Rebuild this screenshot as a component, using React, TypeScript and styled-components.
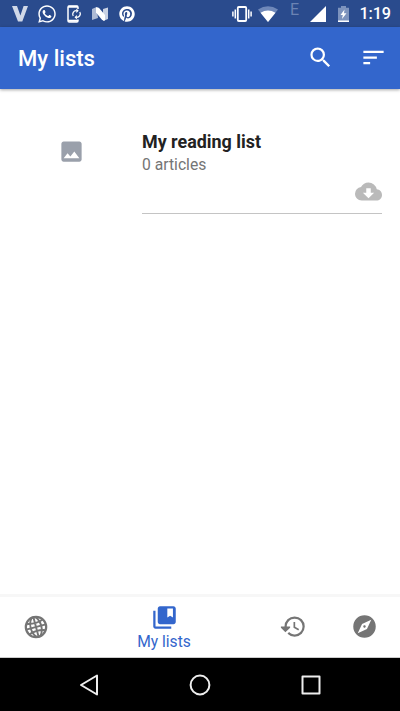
import React from 'react';
import styled, { createGlobalStyle } from 'styled-components';
import { FaWhatsapp, FaPinterest } from 'react-icons/fa';

const GlobalStyle = createGlobalStyle`
  body { margin: 0; background: #fff; font-family: Roboto, "Liberation Sans", sans-serif; }
  * { box-sizing: border-box; }
  svg { display: block; flex: none; }
`;

const Screen = styled.div`
  width: 400px;
  height: 711px;
  display: flex;
  flex-direction: column;
  overflow: hidden;
  background: #fff;
`;

const StatusBar = styled.header`
  height: 27px;
  flex: none;
  display: flex;
  justify-content: space-between;
  background: #2a4b8d;
  color: #fff;
`;

const StatusGroup = styled.div<{ $start?: number; $end?: number }>`
  display: flex;
  align-items: center;
  padding-left: ${(p) => p.$start ?? 0}px;
  padding-right: ${(p) => p.$end ?? 0}px;
`;

const Slot = styled.span<{ $gap?: number }>`
  display: block;
  margin-left: ${(p) => p.$gap ?? 0}px;
`;

const Carrier = styled.span`
  margin: 0 0 7px 12px;
  width: 9px;
  font-size: 16px;
  line-height: 16px;
  color: #6b83b3;
`;

const Clock = styled.time`
  margin-left: 10.500px;
  width: 31.500px;
  font-size: 16.2px;
  line-height: 27px;
  white-space: nowrap;
  letter-spacing: -0.1px;
  font-weight: 500;
`;

const AppBar = styled.div`
  height: 62px;
  flex: none;
  display: flex;
  align-items: center;
  padding: 0 13px 0 18px;
  background: #3366cc;
  color: #fff;
  box-shadow: 0 1px 3px rgba(0, 0, 0, 0.35);
`;

const Title = styled.h1`
  flex: 1;
  margin: 0;
  font-size: 22.1px;
  line-height: 28px;
  font-weight: 500;
`;

const IconButton = styled.button<{ $gap?: number }>`
  padding: 0;
  border: 0;
  background: none;
  color: inherit;
  margin: 0 0 1px ${(p) => p.$gap ?? 0}px;
`;

const List = styled.main`
  flex: 1;
  padding: 40px 18px 0 58px;
`;

const ListItem = styled.article`
  display: flex;
  height: 85px;
`;

const Thumb = styled.div`
  width: 84px;
  padding-top: 8.500px;
  color: #9aa0ab;
`;

const Details = styled.div`
  flex: 1;
  display: flex;
  flex-direction: column;
  border-bottom: 1px solid #c4c4c4;
`;

const ListName = styled.h2`
  margin: 1px 0 0;
  font-size: 17.9px;
  line-height: 23px;
  font-weight: 700;
  color: #222;
`;

const Count = styled.p`
  margin: 2px 0 0;
  font-size: 15.7px;
  line-height: 20px;
  color: #757575;
`;

const Download = styled.div`
  align-self: flex-end;
  margin-top: 3px;
  color: #bababa;
`;

const TabBar = styled.nav`
  height: 64px;
  flex: none;
  display: grid;
  grid-template-columns: 71px 186px 72px 71px;
  border-top: 3px solid #f7f7f7;
  border-bottom: 1px solid #ccc;
`;

const Tab = styled.button<{ $active?: boolean }>`
  display: flex;
  flex-direction: column;
  align-items: center;
  justify-content: ${(p) => (p.$active ? 'flex-start' : 'center')};
  padding: ${(p) => (p.$active ? '7px 0 0' : '0 0 1px')};
  border: 0;
  background: none;
  font-family: inherit;
  color: ${(p) => (p.$active ? '#3366cc' : '#757575')};
`;

const TabLabel = styled.span`
  font-size: 15.6px;
  line-height: 20px;
  margin-top: 1px;
`;

const SystemBar = styled.footer`
  height: 53px;
  flex: none;
  display: grid;
  grid-template-columns: repeat(3, 111px);
  justify-content: center;
  align-items: center;
  justify-items: center;
  background: #000;
`;

const MaterialIcon = ({ d, size }: { d: string; size: number }) => (
  <svg width={size} height={size} viewBox="0 0 24 24" fill="currentColor">
    <path d={d} />
  </svg>
);

const SEARCH =
  'M15.5 14h-.79l-.28-.27A6.47 6.47 0 0 0 16 9.5 6.5 6.5 0 1 0 9.5 16c1.61 0 3.09-.59 4.23-1.57l.27.28v.79l5 4.99L20.49 19l-4.99-5zm-6 0C7.01 14 5 11.99 5 9.5S7.01 5 9.5 5 14 7.01 14 9.5 11.99 14 9.5 14z';
const SORT = 'M3 18h6v-2H3v2zM3 6v2h18V6H3zm0 7h12v-2H3v2z';
const IMAGE =
  'M21 19V5c0-1.1-.9-2-2-2H5c-1.1 0-2 .9-2 2v14c0 1.1.9 2 2 2h14c1.1 0 2-.9 2-2zM8.5 13.5l2.5 3.01L14.5 12l4.5 6H5l3.5-4.5z';
const CLOUD =
  'M19.35 10.04A7.49 7.49 0 0 0 12 4C9.11 4 6.6 5.64 5.35 8.04A5.994 5.994 0 0 0 0 14c0 3.31 2.69 6 6 6h13c2.76 0 5-2.24 5-5 0-2.64-2.05-4.78-4.65-4.96zM17 13l-5 5-5-5h3V9h4v4h3z';
const COLLECTIONS =
  'M4 6H2v14c0 1.1.9 2 2 2h14v-2H4V6zM20 2H8c-1.1 0-2 .9-2 2v12c0 1.1.9 2 2 2h12c1.1 0 2-.9 2-2V4c0-1.1-.9-2-2-2zm-.5 10L17 10.500 14.500 12V4h5v8z';
const HISTORY =
  'M13 3a9 9 0 0 0-9 9H.8v1l4 4 4.200-4v-1H6c0-3.87 3.13-7 7-7s7 3.13 7 7-3.13 7-7 7c-1.93 0-3.68-.79-4.94-2.06l-1.42 1.42A8.954 8.954 0 0 0 13 21a9 9 0 0 0 0-18zm-1 5v5l4.28 2.54.72-1.21-3.5-2.08V8H12z';
const COMPASS =
  'M12 10.9c-.61 0-1.1.49-1.1 1.1s.49 1.1 1.1 1.1c.61 0 1.1-.49 1.1-1.1s-.49-1.1-1.1-1.1zM12 2a10 10 0 1 0 0 20 10 10 0 0 0 0-20zm2.19 12.19L6 18l3.81-8.19L18 6l-3.81 8.19z';

const VIcon = () => (
  <svg width="16" height="16" viewBox="0 0 16 16">
    <path d="M0 0h5l3.400 9.500L11.600 0H16l-5.700 15.500H6z" fill="#d0d8e8" />
  </svg>
);

const PhoneSyncIcon = () => (
  <svg width="15" height="18" viewBox="0 0 15 18" fill="none" stroke="#fff">
    <path d="M11 4V2.200Q11 1 9.800 1H2.200Q1 1 1 2.200v13.600Q1 17 2.200 17h7.600q1.200 0 1.200-1.200V14.500" strokeWidth="1.500" />
    <path d="M1 1.800h10M1 15.800h10" strokeWidth="2" />
    <path d="M6.200 11A3.500 3.500 0 0 1 9.600 5.700M12.800 7A3.500 3.500 0 0 1 9.600 12.300" strokeWidth="1.300" />
    <path d="M9.300 3.500v4.400l2.400-2.200zM9.900 10.100v4.400l-2.400-2.200z" fill="#fff" stroke="none" />
  </svg>
);

const NIcon = () => (
  <svg width="16" height="14" viewBox="0 0 16 14">
    <path d="M0 2l4.500-2 1.500 11L0 13z" fill="#aebbd5" />
    <path d="M11 2l5-1.500V12l-5 2z" fill="#c9d2e4" />
    <path d="M4 .3Q6 0 7.500 1.500L13 8v5.500q-2 .5-3.500-1.300L4 5.500z" fill="#fff" />
  </svg>
);

const VibrateIcon = () => (
  <svg width="20" height="16" viewBox="0 0 20 16" fill="none" stroke="#fff">
    <rect x="5.800" y="1" width="8.400" height="14" rx="1" strokeWidth="1.800" />
    <path d="M3.300 3.500v9M16.700 3.500v9M.9 5.500v5M19.100 5.500v5" strokeWidth="1.500" />
  </svg>
);

const WifiIcon = () => (
  <svg width="20" height="16" viewBox="0 0 20 16">
    <path d="M0 3.500Q10-3 20 3.500L10 16z" fill="#6f88b9" />
    <path d="M2.500 6.800Q10 2 17.500 6.800L10 16z" fill="#fff" />
  </svg>
);

const BatteryIcon = () => (
  <svg width="11" height="16" viewBox="0 0 11 16">
    <path d="M3 0h5v1.800h3V16H0V1.800h3z" fill="#7d93bd" />
    <path d="M0 14.500h11V16H0z" fill="#fff" />
    <path d="M6.500 3.500L2.500 9h2.300L4 13l4.500-5.700H6z" fill="#fff" />
  </svg>
);

const GlobeIcon = () => (
  <svg width="24" height="24" viewBox="0 0 24 24" fill="none" stroke="currentColor" strokeWidth="1.900">
    <circle cx="12" cy="12" r="10.200" strokeWidth="2.200" />
    <g transform="rotate(-15 12 12)">
      <ellipse cx="12" cy="12" rx="5.400" ry="10.200" />
      <path d="M12 2v20M2 12h20M3.500 6.500q8.500 3 17 0M3.500 17.500q8.500-3 17 0" />
    </g>
  </svg>
);

export default function App() {
  return (
    <Screen>
      <GlobalStyle />
      <StatusBar>
        <StatusGroup $start={12}>
          <VIcon />
          <Slot $gap={9}><FaWhatsapp size={20} /></Slot>
          <Slot $gap={10}><PhoneSyncIcon /></Slot>
          <Slot $gap={10}><NIcon /></Slot>
          <Slot $gap={11}><FaPinterest size={16} /></Slot>
        </StatusGroup>
        <StatusGroup $end={9}>
          <VibrateIcon />
          <Slot $gap={6}><WifiIcon /></Slot>
          <Carrier>E</Carrier>
          <Slot $gap={11}>
            <svg width="16" height="16" viewBox="0 0 16 16"><path d="M16 0v16H0z" fill="#fff" /></svg>
          </Slot>
          <Slot $gap={12}><BatteryIcon /></Slot>
          <Clock>1:19</Clock>
        </StatusGroup>
      </StatusBar>

      <AppBar>
        <Title>My lists</Title>
        <IconButton aria-label="Search"><MaterialIcon d={SEARCH} size={27} /></IconButton>
        <IconButton aria-label="Sort" $gap={26}><MaterialIcon d={SORT} size={27} /></IconButton>
      </AppBar>

      <List>
        <ListItem>
          <Thumb><MaterialIcon d={IMAGE} size={27} /></Thumb>
          <Details>
            <ListName>My reading list</ListName>
            <Count>0 articles</Count>
            <Download><MaterialIcon d={CLOUD} size={27} /></Download>
          </Details>
        </ListItem>
      </List>

      <TabBar>
        <Tab aria-label="Explore"><GlobeIcon /></Tab>
        <Tab $active>
          <MaterialIcon d={COLLECTIONS} size={27} />
          <TabLabel>My lists</TabLabel>
        </Tab>
        <Tab aria-label="History"><MaterialIcon d={HISTORY} size={27} /></Tab>
        <Tab aria-label="Nearby"><MaterialIcon d={COMPASS} size={27} /></Tab>
      </TabBar>

      <SystemBar>
        <svg width="20" height="22" viewBox="0 0 20 22" fill="none" stroke="#eee" strokeWidth="2" strokeLinejoin="round">
          <path d="M18 1.500v19L2 11z" />
        </svg>
        <svg width="22" height="22" viewBox="0 0 22 22" fill="none" stroke="#eee" strokeWidth="2">
          <circle cx="11" cy="11" r="9.400" />
        </svg>
        <svg width="20" height="20" viewBox="0 0 20 20" fill="none" stroke="#eee" strokeWidth="2" strokeLinejoin="round">
          <path d="M1.500 1.500h17v17h-17z" />
        </svg>
      </SystemBar>
    </Screen>
  );
}
